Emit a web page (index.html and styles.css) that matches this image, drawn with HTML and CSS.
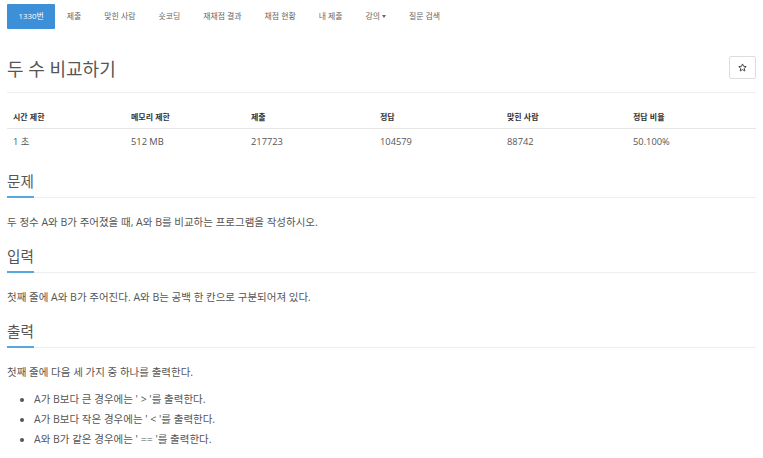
FILE: index.html
```html
<!DOCTYPE html>
<html lang="ko">
<head>
    <meta charset="UTF-8">
    <meta name="viewport" content="width=device-width, initial-scale=1.0">
    <title>1330번: 두 수 비교하기</title>
    <link rel="stylesheet" href="styles.css">
</head>
<body>
    <div class="container">
        <ul class="problem-menu">
            <li class="active"><a href="#">1330번</a></li>
            <li><a href="#">제출</a></li>
            <li><a href="#">맞힌 사람</a></li>
            <li><a href="#">숏코딩</a></li>
            <li><a href="#">재채점 결과</a></li>
            <li><a href="#">채점 현황</a></li>
            <li><a href="#">내 제출</a></li>
            <li><a href="#">강의<span class="caret"></span></a></li>
            <li><a href="#">질문 검색</a></li>
        </ul>

        <div class="page-header">
            <h1>두 수 비교하기</h1>
            <button class="star-btn" type="button">
                <svg width="9" height="9" viewBox="0 0 24 24"><path d="M12 2.5l2.9 6.4 7 .7-5.3 4.7 1.6 6.9L12 17.6l-6.2 3.6 1.6-6.9L2.1 9.6l7-.7z" fill="none" stroke="#444" stroke-width="2.6" stroke-linejoin="round"/></svg>
            </button>
        </div>

        <table class="problem-info">
            <thead>
                <tr>
                    <th class="c1">시간 제한</th>
                    <th class="c2">메모리 제한</th>
                    <th class="c3">제출</th>
                    <th class="c4">정답</th>
                    <th class="c5">맞힌 사람</th>
                    <th class="c6">정답 비율</th>
                </tr>
            </thead>
            <tbody>
                <tr>
                    <td>1 초</td>
                    <td>512 MB</td>
                    <td>217723</td>
                    <td>104579</td>
                    <td>88742</td>
                    <td>50.100%</td>
                </tr>
            </tbody>
        </table>

        <section class="problem-section">
            <h2 class="headline"><span>문제</span></h2>
            <p>두 정수 A와 B가 주어졌을 때, A와 B를 비교하는 프로그램을 작성하시오.</p>
        </section>

        <section class="problem-section">
            <h2 class="headline"><span>입력</span></h2>
            <p>첫째 줄에 A와 B가 주어진다. A와 B는 공백 한 칸으로 구분되어져 있다.</p>
        </section>

        <section class="problem-section">
            <h2 class="headline"><span>출력</span></h2>
            <p>첫째 줄에 다음 세 가지 중 하나를 출력한다.</p>
            <ul>
                <li>A가 B보다 큰 경우에는 '&nbsp;&gt;&nbsp;'를 출력한다.</li>
                <li>A가 B보다 작은 경우에는 '&nbsp;&lt;&nbsp;'를 출력한다.</li>
                <li>A와 B가 같은 경우에는 '&nbsp;==&nbsp;'를 출력한다.</li>
            </ul>
        </section>
    </div>
</body>
</html>
```

FILE: styles.css
```css
body {
    font-family: "Open Sans", "Noto Sans CJK KR", sans-serif;
    color: #555;
    background: #fff;
    margin: 0;
    padding: 0;
}
.container {
    padding: 0 7px;
}
a {
    color: inherit;
    text-decoration: none;
}
.problem-menu {
    display: flex;
    list-style: none;
    margin: 4px 0 0;
    padding: 0;
}
.problem-menu a {
    display: block;
    padding: 0 11.5px;
    font-size: 7.9px;
    line-height: 25px;
    color: #666;
}
.problem-menu .active a {
    background: #3d8fd7;
    color: #fff;
    border-radius: 1px;
}
.caret {
    display: inline-block;
    margin-left: 2px;
    vertical-align: middle;
    border-top: 3px solid #666;
    border-left: 2.5px solid transparent;
    border-right: 2.5px solid transparent;
}
.page-header {
    display: flex;
    justify-content: space-between;
    align-items: flex-start;
    margin-top: 28px;
    padding-bottom: 11px;
    border-bottom: 1px solid #eee;
}
h1 {
    margin: 0;
    font-size: 18px;
    font-weight: 400;
    line-height: 24px;
    color: #555;
}
.star-btn {
    width: 27px;
    height: 23px;
    margin-top: -1px;
    padding: 0;
    background: #fff;
    border: 1px solid #ddd;
    border-radius: 2px;
    display: flex;
    align-items: center;
    justify-content: center;
}
.problem-info {
    width: 100%;
    table-layout: fixed;
    border-collapse: collapse;
    margin-top: 13px;
    line-height: 12px;
}
.problem-info th {
    text-align: left;
    font-size: 8px;
    font-weight: 700;
    color: #333;
    padding: 5px 6px;
    border-bottom: 1px solid #e6e6e6;
}
.problem-info td {
    font-size: 9.3px;
    padding: 7px 6px;
}
.c1 { width: 106px; }
.c2 { width: 108px; }
.c3 { width: 117px; }
.c4 { width: 115px; }
.c5 { width: 114px; }
.problem-section {
    margin-top: 16px;
    font-size: 10.5px;
    line-height: 16px;
}
.headline {
    display: flex;
    margin: 0 0 16px;
    font-size: 14.6px;
    font-weight: 400;
    line-height: 20px;
    color: #555;
    border-bottom: 1px solid #eee;
}
.headline span {
    padding-bottom: 5px;
    margin-bottom: -1px;
    border-bottom: 2px solid #56a9df;
}
.problem-section p {
    margin: 0;
}
.problem-section ul {
    margin: 9px 0 0;
    padding-left: 27px;
}
.problem-section li {
    line-height: 20px;
}
```
